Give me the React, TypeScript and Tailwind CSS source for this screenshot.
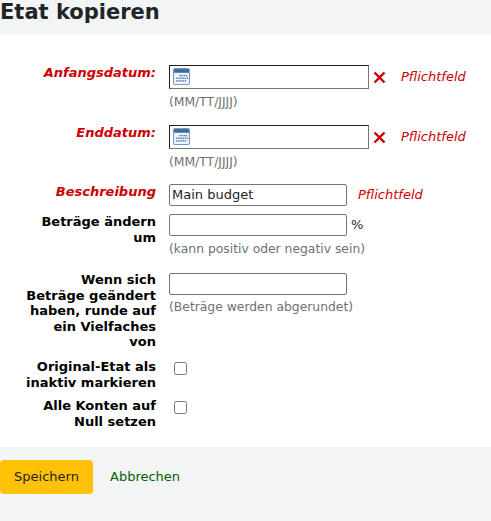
const font = "font-['DejaVu_Sans',sans-serif]";

function CalendarIcon() {
  return (
    <svg width="17" height="17" viewBox="0 0 16 16" className="absolute left-[3px] top-[2px]">
      <rect x="0.5" y="0.5" width="15" height="15" rx="1.5" fill="#f2f6fa" stroke="#6f9bc6" />
      <rect x="1" y="1" width="14" height="3.5" fill="#3d6a9a" />
      <g fill="#3f73a8">
        <rect x="6" y="6.5" width="1.3" height="1.3" />
        <rect x="8" y="6.5" width="1.3" height="1.3" />
        <rect x="10" y="6.5" width="1.3" height="1.3" />
        <rect x="12" y="6.5" width="1.3" height="1.3" />
        <rect x="3" y="9" width="1.3" height="1.3" />
        <rect x="5" y="9" width="1.3" height="1.3" />
        <rect x="7" y="9" width="1.3" height="1.3" />
        <rect x="9" y="9" width="1.3" height="1.3" />
        <rect x="11" y="9" width="1.3" height="1.3" />
        <rect x="13" y="9" width="1.3" height="1.3" />
        <rect x="3" y="11.5" width="1.3" height="1.3" />
        <rect x="5" y="11.5" width="1.3" height="1.3" />
        <rect x="7" y="11.5" width="1.3" height="1.3" />
        <rect x="9" y="11.5" width="1.3" height="1.3" />
        <rect x="11" y="11.5" width="1.3" height="1.3" />
      </g>
    </svg>
  );
}

function DateRow({ label, className }: { label: string; className: string }) {
  return (
    <div className={`flex ${className}`}>
      <label className="w-[156px] shrink-0 pl-[24px] text-right text-[13px] leading-[15px] font-bold italic text-[#cc0000]">{label}</label>
      <div className="ml-[13px]">
        <div className="flex items-center">
          <div className="relative h-[24px] w-[200px] border border-[#1f1f1f] border-r-[#767676] border-b-[#767676] bg-white">
            <CalendarIcon />
          </div>
          <svg width="13" height="13" viewBox="0 0 13 13" className="ml-[4px]">
            <path d="M1.5 1.5 L11.5 11.5 M11.5 1.5 L1.5 11.5" stroke="#cc0000" strokeWidth="2.4" />
          </svg>
          <span className="ml-[15px] text-[13px] italic text-[#cc0000]">Pflichtfeld</span>
        </div>
        <div className="mt-[5px] text-[12.35px] leading-[16px] text-[#707070]">(MM/TT/JJJJ)</div>
      </div>
    </div>
  );
}

export default function App() {
  return (
    <div className={`h-[521px] w-[491px] overflow-hidden bg-white ${font}`}>
      <div className="h-[35px] bg-[#f3f4f4]">
        <h1 className="text-[21px] leading-[24px] font-bold text-[#212529]">Etat kopieren</h1>
      </div>

      <form className="h-[412px] pt-[30px]">
        <DateRow label="Anfangsdatum:" className="h-[60px]" />
        <DateRow label="Enddatum:" className="h-[59px]" />

        <div className="flex h-[30px]">
          <label className="w-[156px] shrink-0 pl-[24px] text-right text-[13px] leading-[15px] font-bold italic text-[#cc0000]">Beschreibung</label>
          <input
            readOnly
            value="Main budget"
            className="ml-[13px] h-[22px] w-[178px] rounded-[2px] border border-[#767676] px-[2px] pb-[1px] text-[13px] text-[#1f1f1f] outline-none"
          />
          <span className="ml-[11px] pt-[3px] text-[13px] leading-[15px] italic text-[#cc0000]">Pflichtfeld</span>
        </div>

        <div className="flex h-[58px]">
          <label className="w-[156px] shrink-0 pl-[24px] text-right text-[13px] leading-[16px] font-bold text-black">Beträge ändern um</label>
          <div className="ml-[13px]">
            <div className="flex items-center">
              <input readOnly className="h-[22px] w-[178px] rounded-[2px] border border-[#767676] outline-none" />
              <span className="ml-[4px] text-[13px] text-[#1f1f1f]">%</span>
            </div>
            <div className="mt-[5px] text-[12.35px] leading-[16px] text-[#707070]">(kann positiv oder negativ sein)</div>
          </div>
        </div>

        <div className="flex h-[89px]">
          <label className="w-[156px] shrink-0 pl-[24px] text-right text-[13px] leading-[15.6px] font-bold text-black">Wenn sich Beträge geändert haben, runde auf ein Vielfaches von</label>
          <div className="ml-[13px]">
            <input readOnly className="h-[22px] w-[178px] rounded-[2px] border border-[#767676] outline-none" />
            <div className="mt-[3px] text-[12.35px] leading-[16px] text-[#707070]">(Beträge werden abgerundet)</div>
          </div>
        </div>

        <div className="flex h-[39px]">
          <label className="-mt-[2px] w-[156px] shrink-0 pl-[24px] text-right text-[13px] leading-[15.6px] font-bold text-black">Original-Etat als inaktiv markieren</label>
          <input type="checkbox" className="mt-[1px] ml-[18px] size-[13px]" />
        </div>

        <div className="flex">
          <label className="-mt-[2px] w-[156px] shrink-0 pl-[24px] text-right text-[13px] leading-[15.6px] font-bold text-black">Alle Konten auf Null setzen</label>
          <input type="checkbox" className="mt-[1px] ml-[18px] size-[13px]" />
        </div>
      </form>

      <div className="flex h-[74px] items-start bg-[#f3f4f4] pt-[13px]">
        <button type="button" className="h-[34px] w-[93px] rounded-[4px] bg-[#ffc107] text-[13px] text-[#1f1f1f]">Speichern</button>
        <a href="#" className="ml-[17px] pt-[8px] text-[13px] leading-[18px] text-[#006100]">Abbrechen</a>
      </div>
    </div>
  );
}
